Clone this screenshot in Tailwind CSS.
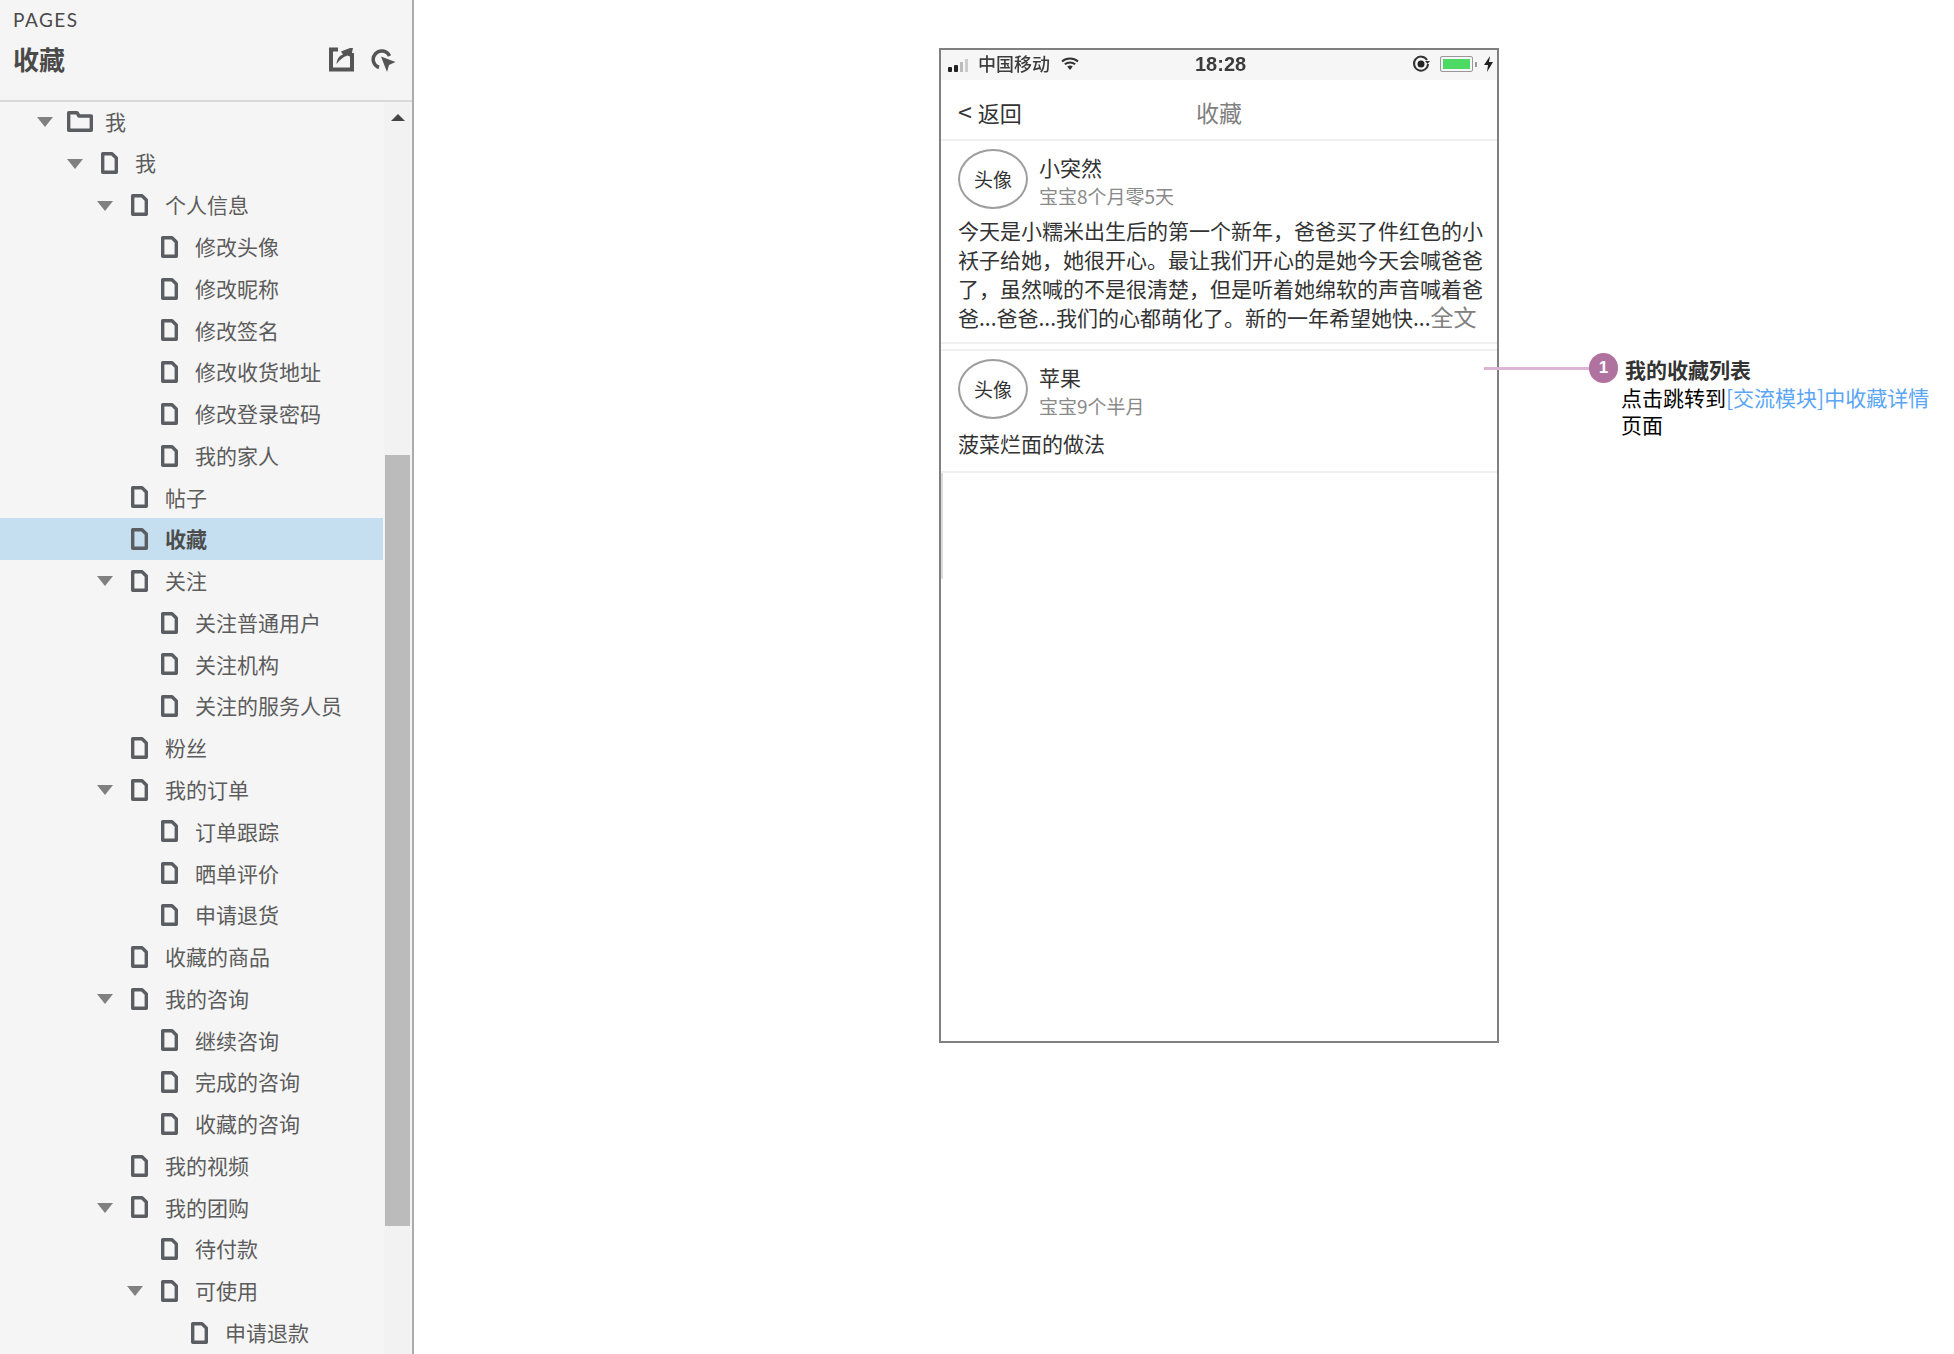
<!DOCTYPE html>
<html lang="zh">

<head>
  <meta charset="UTF-8">
  <script src="https://cdn.jsdelivr.net/npm/@tailwindcss/browser@4"></script>
  <title>收藏</title>
</head>

<body class="relative flex h-screen overflow-hidden bg-white font-['Noto_Sans_CJK_SC',sans-serif]">
  <aside class="relative flex flex-col w-[414px] h-[1354px] shrink-0 overflow-hidden bg-[#f5f5f5] border-r-2 border-[#ababab]">
    <header class="relative h-[101.6px] shrink-0 border-b-2 border-[#d9d9d9]">
      <div class="pl-[13px] pt-[8px] text-[19px] leading-[24px] tracking-[1.5px] text-[#4a4a4a] font-['Lato',sans-serif]">PAGES</div>
      <div class="flex items-center justify-between pl-[13px] pr-[16px] mt-[7px]">
        <h1 class="text-[26px] leading-[40px] font-bold text-[#4a4a4a]">收藏</h1>
        <div class="flex items-center gap-[17px]">
          <svg class="w-[25px] h-[25px]" viewBox="0 0 25 25">
            <path d="M9 2.5H2V22.5H23V6" fill="none" stroke="#555" stroke-width="4"/>
            <path d="M7.5 17C8 11 11 8.5 14 7.5L12 4.5 21 1 24 1 22 10 18.5 8.5C14 10 11 12.5 7.5 17Z" fill="#555"/>
          </svg>
          <svg class="w-[25px] h-[25px]" viewBox="0 0 25 25">
            <path d="M8 20.5A8.5 8.5 0 1 1 18.5 9" fill="none" stroke="#555" stroke-width="3.5"/>
            <path d="M10 9.5L24.5 15 18 18 16 25Z" fill="#555"/>
          </svg>
        </div>
      </div>
    </header>
    <nav id="tree" class="flex flex-col w-[383px] -mt-[1px]"></nav>
    <div class="absolute top-[102px] left-[384px] bottom-0 w-[26px] bg-[#f2f2f2]">
      <div class="absolute left-[7px] top-[12px] w-0 h-0 border-x-[7px] border-x-transparent border-b-[7px] border-b-[#444]"></div>
      <div class="absolute left-[1px] top-[353px] w-[25px] h-[771px] bg-[#bbbbbb]"></div>
    </div>
  </aside>

  <main class="flex-1 pl-[525px] pt-[48px]">
    <div class="relative flex flex-col w-[560px] h-[995px] bg-white border-2 border-[#808080]">
      <!-- status bar -->
      <div class="relative flex items-center h-[30px] shrink-0 bg-[#f6f6f6] blur-[0.4px] text-[#3c3c3c]">
        <div class="flex items-end gap-[2px] ml-[7px] w-[24px]">
          <span class="w-[4px] h-[5px] bg-[#222] rounded-[1px]"></span>
          <span class="w-[4px] h-[7px] bg-[#222] rounded-[1px]"></span>
          <span class="w-[3px] h-[10px] bg-[#bbb]"></span>
          <span class="w-[3px] h-[13px] bg-[#ccc]"></span>
        </div>
        <span class="ml-[6px] -mt-[4px] text-[18px] leading-[20px] font-medium">中国移动</span>
        <svg class="ml-[11px] -mt-[2px] w-[18px] h-[14px]" viewBox="0 0 18 14">
          <path d="M1 4.5C5.5 0.5 12.5 0.5 17 4.5M3.8 7.3C6.8 4.8 11.2 4.8 14.2 7.3" fill="none" stroke="#333" stroke-width="2"/>
          <path d="M6.2 9.6C7.9 8.2 10.1 8.2 11.8 9.6L9 13Z" fill="#333"/>
        </svg>
        <span class="absolute left-[254px] -mt-[3px] w-[50px] text-center font-['Liberation_Sans',sans-serif] text-[20px] leading-[20px] font-bold">18:28</span>
        <svg class="absolute left-[471px] top-[5px] w-[18px] h-[18px]" viewBox="0 0 18 18">
          <path d="M15 5A7 7 0 1 0 16 9" fill="none" stroke="#333" stroke-width="2"/>
          <circle cx="9" cy="9" r="3.5" fill="#222"/>
          <path d="M13 6H18L15.5 9Z" fill="#333"/>
        </svg>
        <div class="absolute left-[499px] top-[6px] w-[33px] h-[16px] p-[2px] border border-[#999] rounded-[2px]">
          <div class="w-full h-full bg-[#4cd964]"></div>
        </div>
        <span class="absolute left-[534px] top-[12px] w-[2px] h-[5px] bg-[#999]"></span>
        <svg class="absolute left-[543px] top-[6px] w-[9px] h-[16px]" viewBox="0 0 9 16">
          <path d="M6 0L0 9H4L3 16 9 6H5Z" fill="#222"/>
        </svg>
      </div>
      <!-- nav -->
      <div class="relative flex items-center justify-center h-[61px] shrink-0 pt-[4px] border-b-2 border-[#f0f0f0]">
        <span class="absolute left-[17px] text-[22px] leading-[30px] text-[#333]"><span class="text-[25px] mr-[1px]">&lt;</span> 返回</span>
        <span class="text-[23px] leading-[30px] text-[#808080]">收藏</span>
      </div>
      <!-- post one -->
      <article class="h-[203px] shrink-0 px-[17px] pt-[8px] border-b-2 border-[#f0f0f0]">
        <div class="flex h-[60px]">
          <div class="flex items-center justify-center w-[70px] h-[60px] rounded-[50%] border-2 border-[#9e9e9e] text-[19px] text-[#333]">头像</div>
          <div class="ml-[11px]">
            <div class="mt-[4px] text-[21px] leading-[29px] text-[#333]">小突然</div>
            <div class="text-[19px] leading-[28px] text-[#8a8a8a]">宝宝8个月零5天</div>
          </div>
        </div>
        <p class="mt-[7px] w-[530px] text-[21px] leading-[29px] text-[#333]">今天是小糯米出生后的第一个新年，爸爸买了件红色的小袄子给她，她很开心。最让我们开心的是她今天会喊爸爸了，虽然喊的不是很清楚，但是听着她绵软的声音喊着爸爸...爸爸...我们的心都萌化了。新的一年希望她快...<span class="text-[23px] leading-[20px] text-[#808080]">全文</span></p>
      </article>
      <!-- post two -->
      <article class="mt-[5px] h-[124px] shrink-0 px-[17px] pt-[8px] border-t-2 border-b-2 border-[#f0f0f0]">
        <div class="flex h-[60px]">
          <div class="flex items-center justify-center w-[70px] h-[60px] rounded-[50%] border-2 border-[#9e9e9e] text-[19px] text-[#333]">头像</div>
          <div class="ml-[11px]">
            <div class="mt-[4px] text-[21px] leading-[29px] text-[#333]">苹果</div>
            <div class="text-[19px] leading-[28px] text-[#8a8a8a]">宝宝9个半月</div>
          </div>
        </div>
        <p class="mt-[10px] text-[21px] leading-[29px] text-[#333]">菠菜烂面的做法</p>
      </article>
      <div class="w-[2px] h-[106px] bg-[#dcdcdc]"></div>
    </div>
  </main>

  <!-- annotation pin over the canvas -->
  <div class="absolute left-[1484px] top-[367px] w-[106px] h-[3px] bg-[#dcb4d4]"></div>
  <div class="absolute left-[1589px] top-[353px] flex items-center justify-center w-[29px] h-[30px] rounded-full bg-[#b0739f] text-white text-[17px] font-bold font-['Liberation_Sans',sans-serif]">1</div>
  <div class="absolute left-[1621px] top-[356px] w-[320px] text-[21px] leading-[28px] text-black">
    <div class="pl-[4px] -mt-[1px] font-bold text-[#333]">我的收藏列表</div>
    <div class="leading-[27px] pt-[1px]">点击跳转到<span class="text-[#5aa5f5]">[交流模块]中收藏详情</span>页面</div>
  </div>

  <script>
    // [level, label, has children, selected]
    const pages = [
      [1, '我', 1], [2, '个人信息', 1], [3, '修改头像'], [3, '修改昵称'], [3, '修改签名'], [3, '修改收货地址'],
      [3, '修改登录密码'], [3, '我的家人'], [2, '帖子'], [2, '收藏', 0, 1], [2, '关注', 1], [3, '关注普通用户'],
      [3, '关注机构'], [3, '关注的服务人员'], [2, '粉丝'], [2, '我的订单', 1], [3, '订单跟踪'], [3, '晒单评价'],
      [3, '申请退货'], [2, '收藏的商品'], [2, '我的咨询', 1], [3, '继续咨询'], [3, '完成的咨询'], [3, '收藏的咨询'],
      [2, '我的视频'], [2, '我的团购', 1], [3, '待付款'], [3, '可使用', 1], [4, '申请退款']
    ];
    const tri = '<span class="mt-[1px] w-0 h-0 border-x-[8px] border-x-transparent border-t-[10px] border-t-[#808080]"></span>';
    const doc = '<svg class="w-[17px] h-[22px]" viewBox="0 0 17 22"><path d="M1.7 1.7H11L15.3 6V20.3H1.7Z" fill="none" stroke="#5a5d62" stroke-width="3.4" stroke-linejoin="round"/></svg>';
    const folder = '<svg class="w-[26px] h-[21px]" viewBox="0 0 26 21"><path d="M1.7 19.3V1.7H10L12 5H24.3V19.3Z" fill="none" stroke="#5a5d62" stroke-width="3.4" stroke-linejoin="round"/></svg>';
    const row = (level, label, kids, selected, icon) =>
      `<div class="flex items-center h-[41.77px] shrink-0 text-[21px] ${selected ? 'bg-[#c5dff0] font-bold text-[#4d4d4d]' : 'text-[#5c5c5c]'}" style="padding-left:${level === 0 ? 37 : 37 + 30 * level}px">
        <span class="flex items-center ${level === 0 ? 'w-[30px]' : 'w-[34px]'} shrink-0">${kids ? tri : ''}</span>
        <span class="flex items-center ${level === 0 ? 'w-[38px]' : 'w-[34px]'} shrink-0">${icon}</span>
        <span>${label}</span>
      </div>`;
    document.getElementById('tree').innerHTML = row(0, '我', 1, 0, folder) +
      pages.map(p => row(p[0], p[1], p[2], p[3], doc)).join('');
  </script>
</body>

</html>
